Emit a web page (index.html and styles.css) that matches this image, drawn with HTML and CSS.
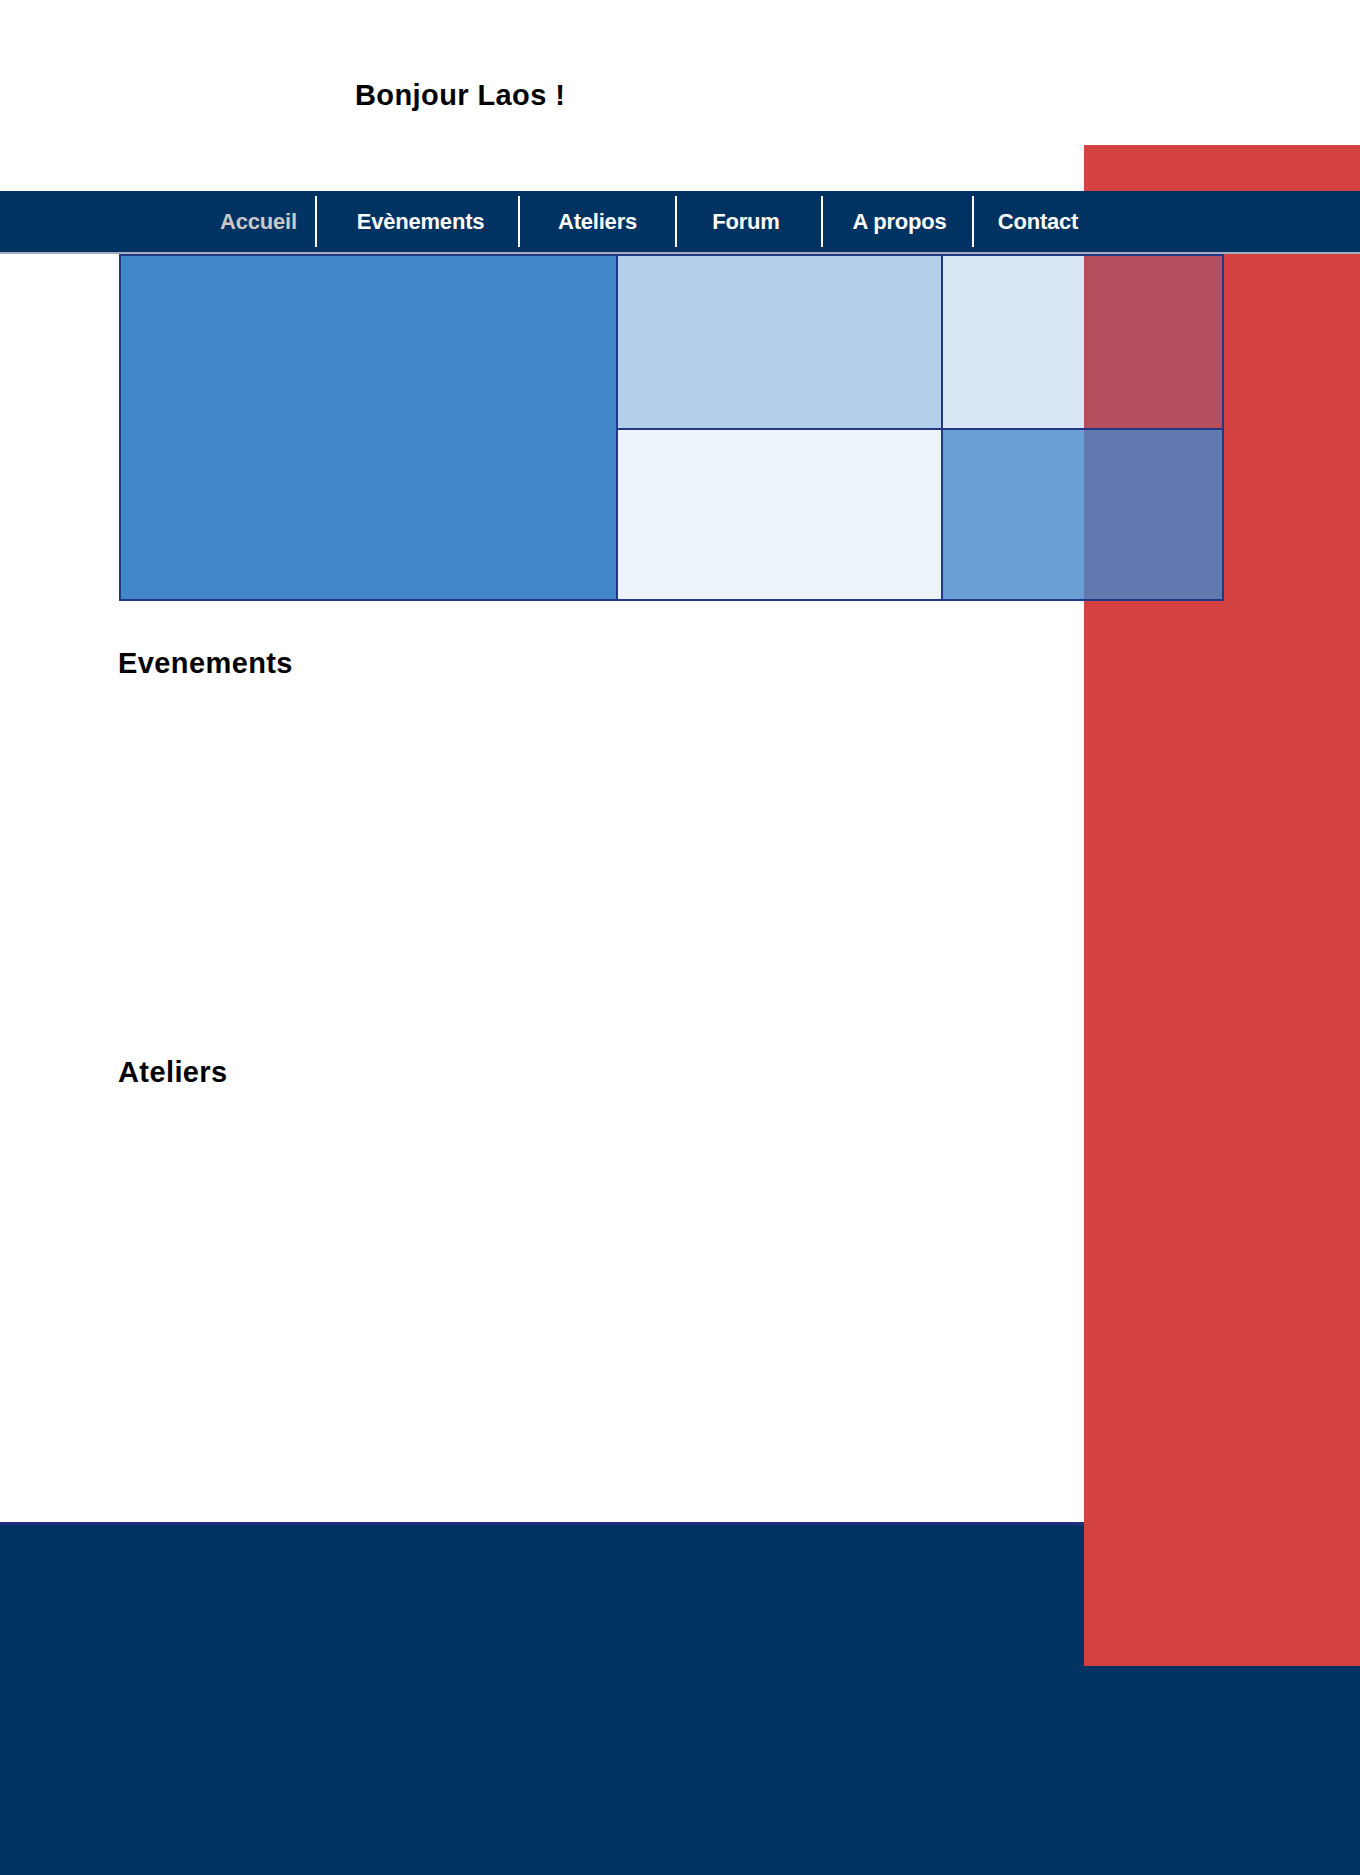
FILE: index.html
```html
<!DOCTYPE html>
<html>
<head>
    <title>Bonjour Laos</title>
    <link rel="stylesheet" href="styles.css">
</head>
<body>
    <div class="bande"></div>

    <header class="entete">
        <h1>Bonjour Laos !</h1>
    </header>

    <nav class="menu">
        <ul>
            <li class="actif">Accueil</li>
            <li>Evènements</li>
            <li>Ateliers</li>
            <li>Forum</li>
            <li>A propos</li>
            <li>Contact</li>
        </ul>
    </nav>

    <!-- Mosaique de la page d'accueil -->
    <div class="mosaique">
        <div class="case grande"></div>
        <div class="case c2"></div>
        <div class="case c3"></div>
        <div class="case c4"></div>
        <div class="case c5"></div>
    </div>

    <section class="bloc evenements">
        <h2>Evenements</h2>
    </section>

    <section class="bloc ateliers">
        <h2>Ateliers</h2>
    </section>

    <footer class="pied"></footer>
</body>
</html>
```

FILE: styles.css
```css
/* Styles de la page Bonjour Laos */
body {
    margin: 0;
    padding: 0;
    font-family: "Liberation Sans", Arial, sans-serif;
    background-color: #fff;
    position: relative;
    min-height: 1875px;
}

h1, h2 {
    margin: 0;
    font-size: 29px;
    font-weight: bold;
    letter-spacing: 0.4px;
    color: #000;
}

/* Bande rouge a droite */
.bande {
    position: absolute;
    top: 145px;
    left: 1084px;
    width: 276px;
    height: 1521px;
    background-color: #d44141;
    z-index: 1;
}

.entete {
    height: 191px;
    box-sizing: border-box;
    padding: 79px 0 0 355px;
}

.menu {
    position: relative;
    z-index: 2;
    height: 61px;
    background-color: #003262;
    border-bottom: 2px solid #a3afc0;
}

.menu ul {
    display: grid;
    grid-template-columns: 113px 203px 157px 146px 151px 130px;
    height: 100%;
    margin: 0 0 0 202px;
    padding: 0;
    list-style: none;
}

.menu li {
    display: flex;
    align-items: center;
    justify-content: center;
    margin: 5px 0;
    color: #fff;
    font-size: 22px;
    font-weight: bold;
    letter-spacing: -0.2px;
}

.menu li + li {
    border-left: 2px solid #fff;
}

.menu li:nth-child(2) { padding-left: 6px; }
.menu li:nth-child(4) { padding-right: 6px; }
.menu li:nth-child(5) { padding-left: 4px; }

.menu li.actif {
    color: #c8c8c8;
}

/* Mosaique */
.mosaique {
    position: relative;
    z-index: 2;
    display: grid;
    grid-template-columns: 497px 325px 281px;
    grid-template-rows: 174px 171px;
    width: 1105px;
    margin-left: 119px;
    box-sizing: border-box;
    border-top: 2px solid #233787;
    border-left: 2px solid #233787;
}

.case {
    border-right: 2px solid #233787;
    border-bottom: 2px solid #233787;
}

.grande {
    grid-row: 1 / 3;
    background-color: #4387cb;
}

.c2 { background-color: rgba(67, 135, 203, 0.4); }
.c3 { background-color: rgba(67, 135, 203, 0.2); }
.c4 { background-color: rgba(67, 135, 203, 0.1); }
.c5 { background-color: rgba(67, 135, 203, 0.8); }

.bloc {
    padding-left: 118px;
}

.evenements {
    margin-top: 46px;
    height: 409px;
}

.ateliers {
    height: 466px;
}

.pied {
    height: 350px;
    background-color: #003262;
    border-top: 3px solid #1f2e80;
}
```
